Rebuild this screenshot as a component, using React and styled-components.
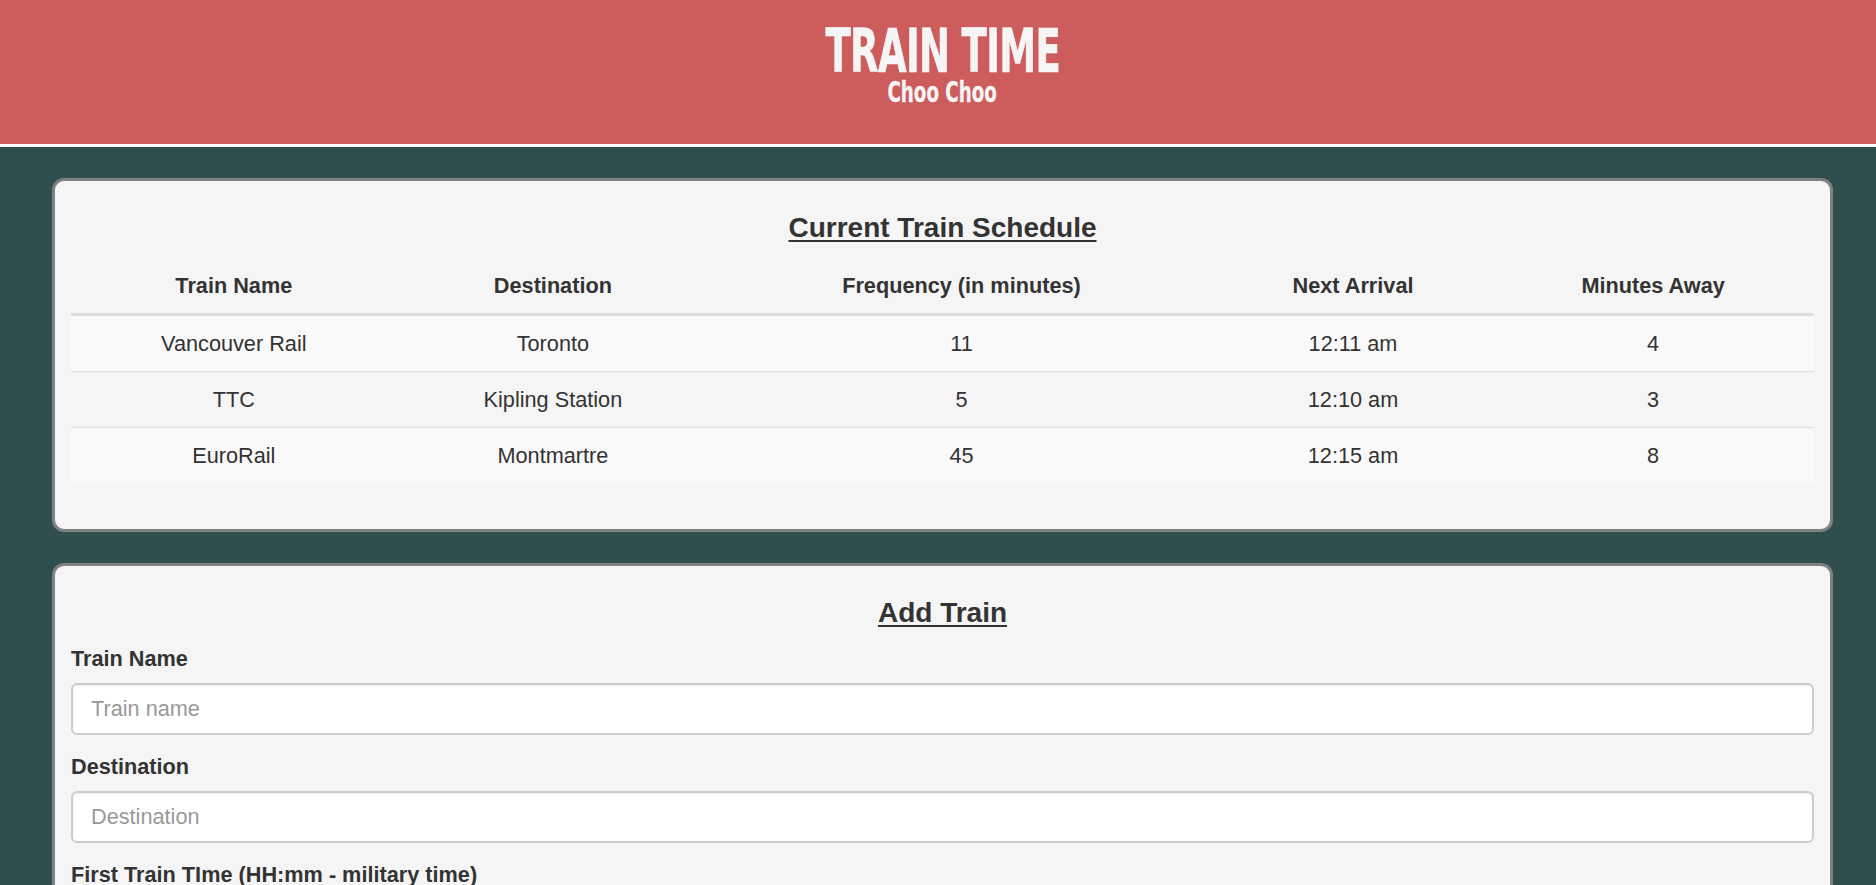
import React from "react";
import styled, { createGlobalStyle } from "styled-components";

const GlobalStyle = createGlobalStyle`
  html, body {
    margin: 0;
    padding: 0;
  }
  body {
    background: #2f4f4f;
    font-family: "Liberation Sans", Arial, sans-serif;
    color: #333;
  }
  * { box-sizing: border-box; }
`;

const Header = styled.header`
  height: 147px;
  background: #cd5c5c;
  border-bottom: 3px solid #ffffff;
  display: flex;
  flex-direction: column;
  align-items: center;
  padding: 22px 0 0 9px;
  color: #f5f5f5;
`;

const Title = styled.h1`
  margin: 0;
  font-family: "DejaVu Sans Condensed", "DejaVu Sans", sans-serif;
  font-stretch: condensed;
  font-weight: 700;
  font-size: 61px;
  line-height: 57px;
  letter-spacing: -1px;
  -webkit-text-stroke: 0.6px currentColor;
  transform: scaleX(${(p) => p.$scale});
  white-space: nowrap;
`;

const Subtitle = styled.h2`
  margin: 0;
  font-family: "DejaVu Sans Condensed", "DejaVu Sans", sans-serif;
  font-stretch: condensed;
  font-weight: 700;
  font-size: 29px;
  line-height: 26px;
  -webkit-text-stroke: 0.3px currentColor;
  transform: scaleX(${(p) => p.$scale});
  white-space: nowrap;
`;

const Main = styled.main`
  display: flex;
  flex-direction: column;
  gap: 31px;
  padding: 31px 43px 40px 52px;
`;

const Panel = styled.section`
  background: #f5f5f5;
  border: 3px solid #808080;
  border-radius: 12px;
  padding: 32px 16px 46px;
`;

const PanelTitle = styled.h4`
  margin: 0 0 15px;
  text-align: center;
  font-size: 28px;
  line-height: 1.1;
  font-weight: 700;
  text-decoration: underline;
  text-underline-offset: 3px;
  color: #333;
`;

const Table = styled.table`
  width: 100%;
  margin-top: 3px;
  border-collapse: separate;
  border-spacing: 0;
  font-size: 21.7px;
  color: #333;
`;

const Th = styled.th`
  padding: 12px;
  line-height: 30px;
  font-weight: 700;
  text-align: center;
  vertical-align: bottom;
  border-bottom: 3px solid #dddddd;
`;

const Row = styled.tr`
  background: ${(p) => (p.$striped ? "#f9f9f9" : "transparent")};
`;

const Td = styled.td`
  padding: 12px;
  line-height: 31px;
  text-align: center;
  border-top: ${(p) => (p.$first ? "none" : "1px solid #dddddd")};
`;

const FormGroup = styled.div`
  margin-bottom: 17px;
`;

const Label = styled.label`
  display: block;
  font-size: 21.7px;
  line-height: 30px;
  font-weight: 700;
  margin-bottom: 9px;
  color: #333;
`;

const Input = styled.input`
  display: block;
  width: 100%;
  height: 52px;
  padding: 0 18px;
  font-family: "Liberation Sans", Arial, sans-serif;
  font-size: 21.7px;
  color: #555;
  background: #ffffff;
  border: 2px solid #cccccc;
  border-radius: 6px;
  box-shadow: inset 0 1.5px 1.5px rgba(0, 0, 0, 0.075);
  outline: none;
  &::placeholder {
    color: #999999;
  }
`;

const SubmitButton = styled.button`
  font-family: "Liberation Sans", Arial, sans-serif;
  font-size: 21.7px;
  line-height: 30px;
  padding: 9px 18px;
  color: #fff;
  background: #337ab7;
  border: 2px solid #2e6da4;
  border-radius: 6px;
`;

const trains = [
  { name: "Vancouver Rail", dest: "Toronto", freq: 11, next: "12:11 am", away: 4 },
  { name: "TTC", dest: "Kipling Station", freq: 5, next: "12:10 am", away: 3 },
  { name: "EuroRail", dest: "Montmartre", freq: 45, next: "12:15 am", away: 8 },
];

const fields = [
  { id: "train-name", label: "Train Name", placeholder: "Train name" },
  { id: "destination", label: "Destination", placeholder: "Destination" },
  { id: "first-time", label: "First Train TIme (HH:mm - military time)", placeholder: "HH:mm" },
  { id: "frequency", label: "Frequency (in minutes)", placeholder: "Frequency" },
];

export default function App() {
  return (
    <>
      <GlobalStyle />
      <Header>
        <Title $scale={0.675}>TRAIN TIME</Title>
        <Subtitle $scale={0.7}>Choo Choo</Subtitle>
      </Header>
      <Main>
        <Panel>
          <PanelTitle>Current Train Schedule</PanelTitle>
          <Table>
            <thead>
              <tr>
                <Th>Train Name</Th>
                <Th>Destination</Th>
                <Th>Frequency (in minutes)</Th>
                <Th>Next Arrival</Th>
                <Th>Minutes Away</Th>
              </tr>
            </thead>
            <tbody>
              {trains.map((t, i) => (
                <Row key={t.name} $striped={i % 2 === 0}>
                  <Td $first={i === 0}>{t.name}</Td>
                  <Td $first={i === 0}>{t.dest}</Td>
                  <Td $first={i === 0}>{t.freq}</Td>
                  <Td $first={i === 0}>{t.next}</Td>
                  <Td $first={i === 0}>{t.away}</Td>
                </Row>
              ))}
            </tbody>
          </Table>
        </Panel>
        <Panel>
          <PanelTitle>Add Train</PanelTitle>
          <form onSubmit={(e) => e.preventDefault()}>
            {fields.map((f) => (
              <FormGroup key={f.id}>
                <Label htmlFor={f.id}>{f.label}</Label>
                <Input id={f.id} type="text" placeholder={f.placeholder} />
              </FormGroup>
            ))}
            <SubmitButton type="submit">Submit</SubmitButton>
          </form>
        </Panel>
      </Main>
    </>
  );
}
